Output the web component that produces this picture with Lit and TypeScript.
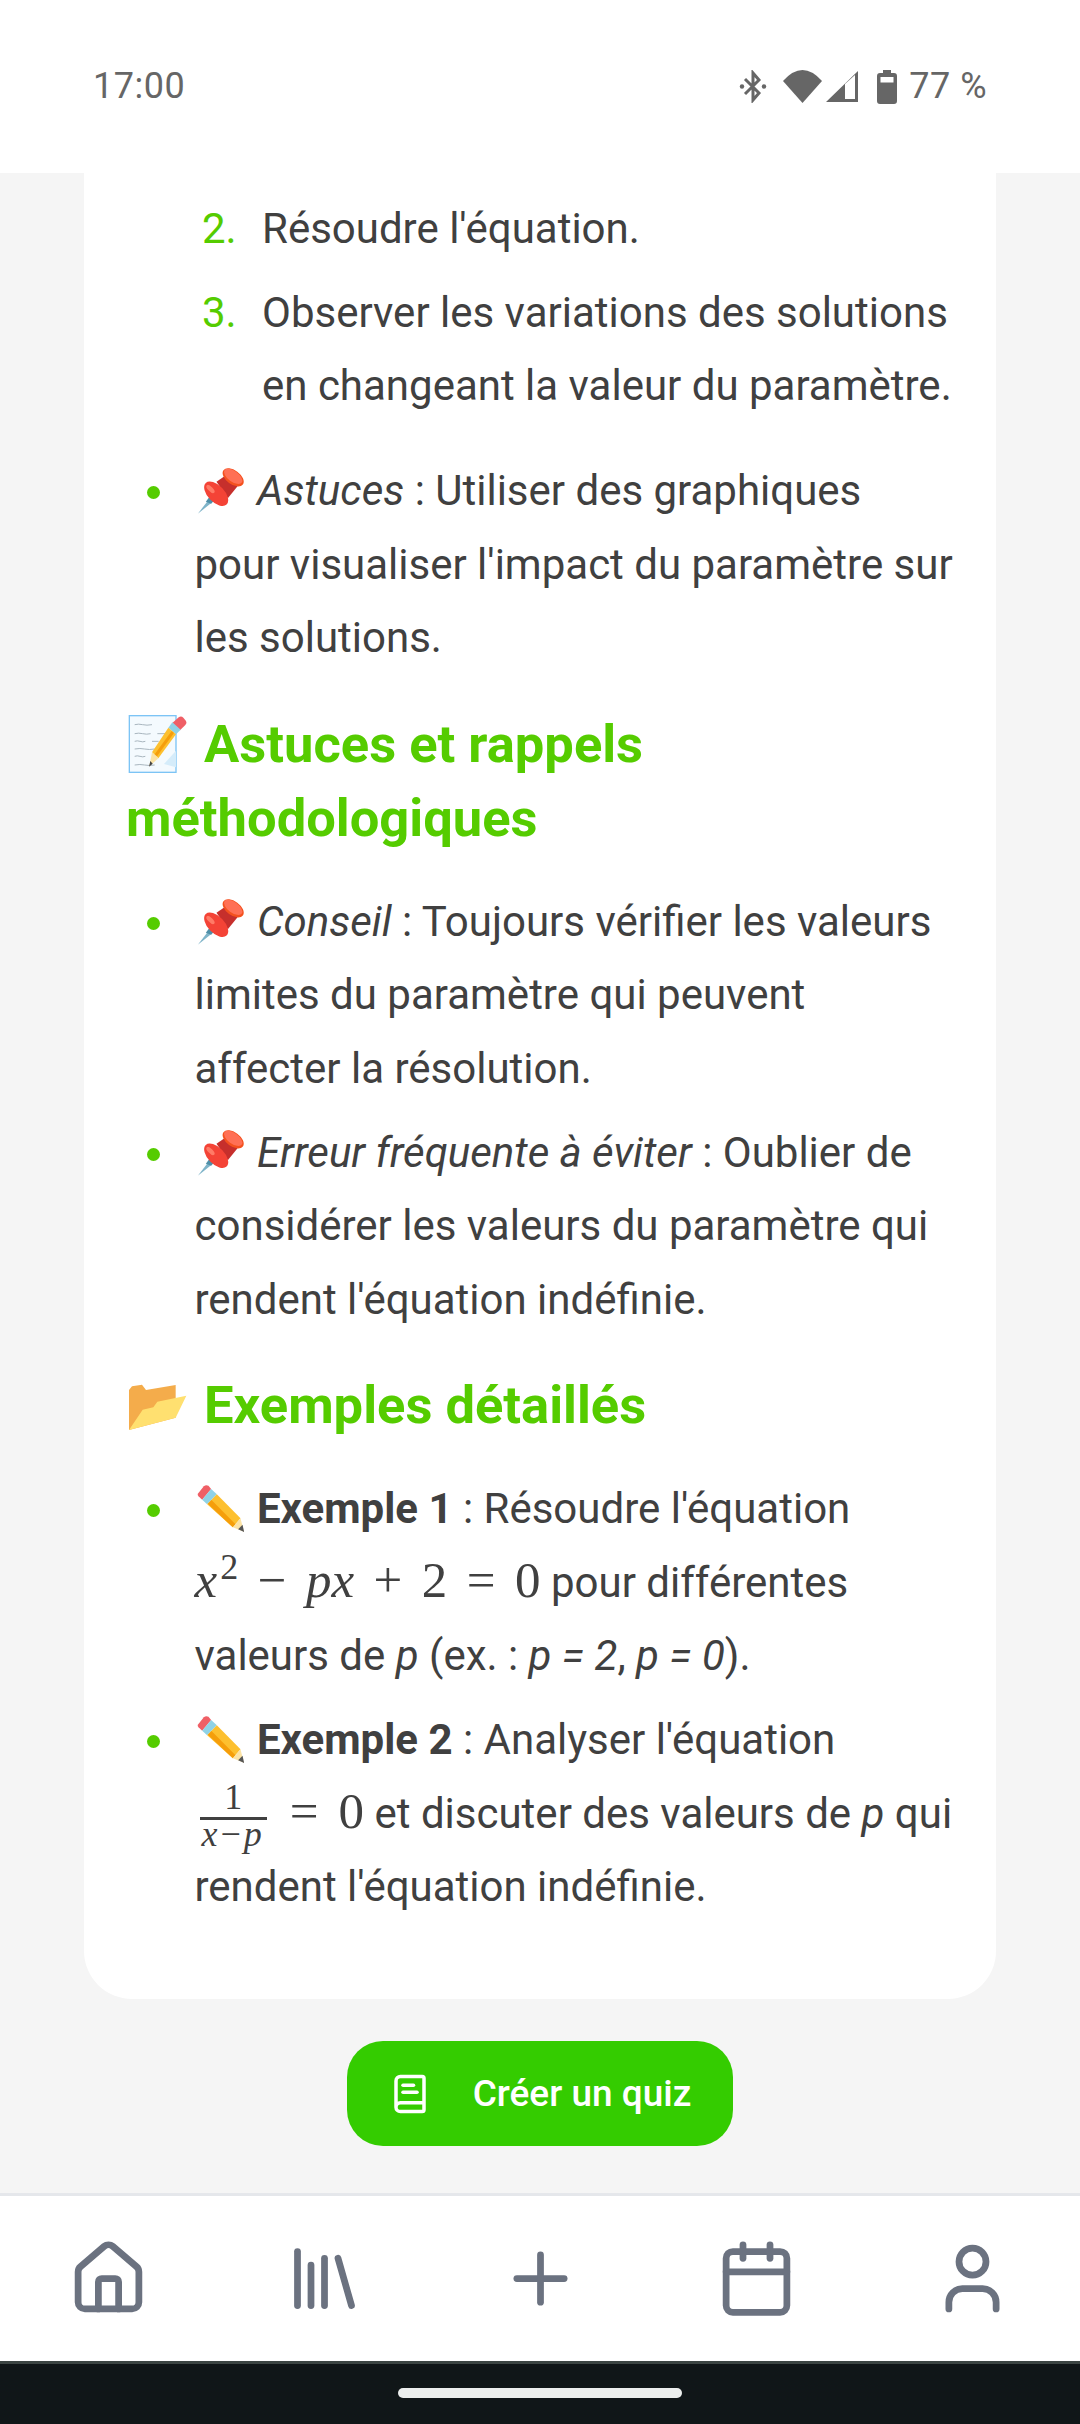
import { LitElement, css, html, svg } from "lit";
import { customElement } from "lit/decorators.js";

const pin = html`<svg class="emoji" viewBox="15 12 153 153">
  <path d="M22 158 58 112 70 120Z" fill="#7fb4c9" />
  <path d="M46 122 58 106 72 116 62 128Z" fill="#4f8fa8" />
  <path d="M78 62 116 36 146 70 112 112Z" fill="#c62f2c" />
  <ellipse cx="77" cy="98" rx="45" ry="25" transform="rotate(46 77 98)" fill="#f44336" />
  <ellipse cx="60" cy="84" rx="16" ry="7" transform="rotate(46 60 84)" fill="#ff7a66" />
  <ellipse cx="128" cy="49" rx="36" ry="21" transform="rotate(36 128 49)" fill="#f4511e" />
  <ellipse cx="128" cy="46" rx="32" ry="16" transform="rotate(36 128 46)" fill="#ff7055" />
</svg>`;

const pencil = html`<svg class="emoji" viewBox="15 12 153 153">
  <path d="M22 44 40 22Q46 16 54 20L62 30 35 62 24 52Q20 48 22 44Z" fill="#ef5f66" />
  <path d="M35 62 62 30 79 46 50 76Z" fill="#8fd2e6" />
  <path d="M50 76 79 46 150 118 127 145Z" fill="#fdc02f" />
  <path d="M52 74 63 63 135 136 127 145Z" fill="#f59e0b" />
  <path d="M127 145 150 118 160 158Z" fill="#fbe3a6" />
  <path d="M143 151 156 137 161 159Z" fill="#555" />
</svg>`;

const memo = html`<svg class="emoji big" viewBox="6 6 195 195">
  <rect x="16" y="20" width="140" height="170" fill="#f4fafe" stroke="#7cc4f5" stroke-width="4" />
  <path d="M32 47q12-3 24 0t28 0M32 74q12-3 24 0t24 0M100 74h26M32 97q8-3 16 0t16 0M84 97h20M32 120q16-3 30 0t30 0M32 142q8-3 16 0t16 0M32 168q16-3 30 0t30 0" fill="none" stroke="#a9b6bf" stroke-width="3" />
  <path d="M120 165 156 125V175Z" fill="#d5ecfa" />
  <path d="M145 42 165 24Q172 20 178 26L186 36Q190 42 184 48L168 64Z" fill="#ef5f66" />
  <path d="M133 56 145 40 170 62 156 76Z" fill="#8fd2e6" />
  <path d="M133 56 156 76 103 148 84 130Z" fill="#fdc02f" />
  <path d="M143 66 150 72 99 142 92 136Z" fill="#f59e0b" />
  <path d="M84 130 103 148 76 172Z" fill="#fbe3a6" />
  <path d="M79 156 86 164 75 173Z" fill="#444" />
</svg>`;

const folder = html`<svg class="emoji big" viewBox="6 -9 195 195">
  <path d="M15 45 24 34 54 29 66 45 155 30V128L15 165Z" fill="#f4ac4b" />
  <path d="M15 165 56 104 88 97 100 80 187 62 155 128Z" fill="#ffe070" />
</svg>`;

const navIcons = [
  svg`<path d="M15 21v-8a1 1 0 0 0-1-1h-4a1 1 0 0 0-1 1v8" /><path d="M3 10a2 2 0 0 1 .709-1.528l7-5.999a2 2 0 0 1 2.582 0l7 5.999A2 2 0 0 1 21 10v9a2 2 0 0 1-2 2H5a2 2 0 0 1-2-2z" />`,
  svg`<path d="m16 6 4 14" /><path d="M12 6v14" /><path d="M8 8v12" /><path d="M4 4v16" />`,
  svg`<path d="M5 12h14" /><path d="M12 5v14" />`,
  svg`<path d="M8 2v4" /><path d="M16 2v4" /><rect x="3" y="4" width="18" height="18" rx="2" /><path d="M3 10h18" />`,
  svg`<path d="M19 21v-2a4 4 0 0 0-4-4H9a4 4 0 0 0-4 4v2" /><circle cx="12" cy="7" r="4" />`,
];

@customElement("app-root")
export class AppRoot extends LitElement {
  render() {
    return html`
      <div class="status">
        <span>17:00</span>
        <div class="status-right">
          <svg class="bt" viewBox="0 0 28 33">
            <path d="M6 9 20 23 14 30V3L20 10 6 24" fill="none" stroke="#666" stroke-width="3" />
            <circle cx="3" cy="16.5" r="2.2" fill="#666" /><circle cx="25" cy="16.5" r="2.2" fill="#666" />
          </svg>
          <svg class="wifi" viewBox="0 0 39 33"><path d="M0 11Q19.5-11 39 11L19.5 33Z" fill="#666" /></svg>
          <svg class="signal" viewBox="0 0 32 31">
            <path d="M0 31 32 0V31ZM19 13V28H29V4Z" fill="#666" fill-rule="evenodd" />
          </svg>
          <svg class="battery" viewBox="0 0 20 34">
            <path d="M6 0H14V3H17Q20 3 20 6V31Q20 34 17 34H3Q0 34 0 31V6Q0 3 3 3H6Z" fill="#666" />
            <rect x="3.5" y="7" width="13" height="5.5" fill="#fff" />
          </svg>
          <span class="pct">77 %</span>
        </div>
      </div>

      <main>
        <article class="card">
          <ol class="steps">
            <li><span class="num">2.</span><span>Résoudre l'équation.</span></li>
            <li><span class="num">3.</span><span>Observer les variations des solutions en changeant la valeur du paramètre.</span></li>
          </ol>
          <ul>
            <li>
              <i class="dot"></i>
              <div>${pin} <em>Astuces</em> : Utiliser des graphiques pour visualiser l'impact du paramètre sur les solutions.</div>
            </li>
          </ul>

          <h3>${memo} Astuces et rappels méthodologiques</h3>
          <ul>
            <li>
              <i class="dot"></i>
              <div>${pin} <em>Conseil</em> : Toujours vérifier les valeurs limites du paramètre qui peuvent affecter la résolution.</div>
            </li>
            <li>
              <i class="dot"></i>
              <div>${pin} <em>Erreur fréquente à éviter</em> : Oublier de considérer les valeurs du paramètre qui rendent l'équation indéfinie.</div>
            </li>
          </ul>

          <h3>${folder} Exemples détaillés</h3>
          <ul>
            <li>
              <i class="dot"></i>
              <div>
                ${pencil} <strong>Exemple 1</strong> : Résoudre l'équation
                <span class="math"><i>x</i><sup>2</sup><span class="op">−</span><i>px</i><span class="op">+</span>2<span class="op">=</span>0</span>
                pour différentes valeurs de <em>p</em> (ex. : <em>p = 2</em>, <em>p = 0</em>).
              </div>
            </li>
            <li>
              <i class="dot"></i>
              <div>
                ${pencil} <strong>Exemple 2</strong> : Analyser l'équation
                <span class="math"><span class="frac"><span class="top">1</span><span class="bottom"><i>x</i>−<i>p</i></span></span><span class="op eq">=</span>0</span>
                et discuter des valeurs de <em>p</em> qui rendent l'équation indéfinie.
              </div>
            </li>
          </ul>
        </article>

        <button class="quiz">
          <svg viewBox="0 0 24 24">
            <path d="M4 19.5v-15A2.5 2.5 0 0 1 6.5 2H19a1 1 0 0 1 1 1v18a1 1 0 0 1-1 1H6.5a1 1 0 0 1 0-5H20" />
            <path d="M8 11h8" /><path d="M8 7h6" />
          </svg>
          <span>Créer un quiz</span>
        </button>
      </main>

      <nav>
        ${navIcons.map((icon) => html`<a><svg viewBox="0 0 24 24">${icon}</svg></a>`)}
      </nav>
      <div class="gesture"><span></span></div>
    `;
  }

  static styles = css`
    :host {
      display: flex;
      flex-direction: column;
      height: 2424px;
      overflow: hidden;
      background: #f5f5f5;
      font-family: Roboto, sans-serif;
      font-size: 42px;
      line-height: 73.5px;
      color: #404040;
    }
    .status {
      flex: none;
      height: 173px;
      background: #fff;
      display: flex;
      align-items: center;
      justify-content: space-between;
      padding: 0 93px;
      font-size: 36px;
      letter-spacing: 0.5px;
      color: #666;
    }
    .status-right {
      display: flex;
      align-items: center;
    }
    .bt {
      width: 28px;
      height: 33px;
    }
    .wifi {
      width: 39px;
      height: 33px;
      margin-left: 16px;
    }
    .signal {
      width: 32px;
      height: 31px;
      margin-left: 4px;
    }
    .battery {
      width: 20px;
      height: 34px;
      margin-left: 19px;
    }
    .pct {
      margin-left: 12px;
    }
    main {
      flex: 1;
      min-height: 0;
      overflow: hidden;
      display: flex;
      flex-direction: column;
      align-items: center;
    }
    .card {
      box-sizing: border-box;
      width: 912px;
      background: #fff;
      border-radius: 0 0 48px 48px;
      padding: 18.5px 42px 75.5px;
    }
    ol,
    ul {
      list-style: none;
      margin: 0;
      padding: 0;
    }
    .steps {
      margin-left: 76px;
    }
    .steps li {
      display: grid;
      grid-template-columns: 60px 1fr;
    }
    .steps li + li {
      margin-top: 10.5px;
    }
    .num {
      color: #55cc00;
    }
    .steps + ul {
      margin-top: 31.5px;
    }
    ul li {
      display: grid;
      grid-template-columns: 68.5px 1fr;
    }
    ul li + li {
      margin-top: 10.5px;
    }
    .dot {
      width: 13px;
      height: 13px;
      margin: 32px 0 0 20.5px;
      border-radius: 50%;
      background: #55cc00;
    }
    h3 {
      margin: 32px 0 30px;
      font-size: 52.5px;
      font-weight: 700;
      line-height: 74px;
      color: #55cc00;
    }
    .emoji {
      width: 52px;
      height: 51px;
      vertical-align: -11px;
    }
    .emoji.big {
      width: 65px;
      height: 65px;
      vertical-align: -14px;
    }
    strong {
      font-weight: 700;
    }
    .math {
      font-family: "Liberation Serif", serif;
      font-size: 51px;
      line-height: 1;
      white-space: nowrap;
    }
    .math sup {
      font-size: 36px;
      line-height: 0;
      margin-left: 3px;
    }
    .op {
      margin: 0 19.5px;
    }
    .op.eq {
      margin: 0 20px 0 21px;
    }
    .frac {
      display: inline-flex;
      flex-direction: column;
      align-items: stretch;
      justify-content: center;
      height: 30px;
      margin: 0 2px 0 5px;
      vertical-align: 18.5px;
      font-size: 36px;
      line-height: 40px;
      text-align: center;
    }
    .top {
      border-bottom: 3px solid #404040;
    }
    .bottom {
      line-height: 28px;
      padding: 0 2px;
      letter-spacing: 3px;
    }
    .quiz {
      flex: none;
      display: flex;
      align-items: center;
      gap: 42px;
      height: 105px;
      margin-top: 42px;
      padding: 0 42px;
      border: 0;
      border-radius: 36px;
      background: #34cc00;
      color: #fff;
      font-family: Roboto, sans-serif;
      font-size: 37px;
      font-weight: 500;
    }
    .quiz svg {
      width: 42px;
      height: 42px;
      fill: none;
      stroke: #fff;
      stroke-width: 2;
      stroke-linecap: round;
      stroke-linejoin: round;
    }
    nav {
      flex: none;
      box-sizing: border-box;
      height: 168px;
      display: flex;
      background: #fff;
      border-top: 3px solid #e5e7eb;
    }
    nav a {
      flex: 1;
      display: flex;
      align-items: center;
      justify-content: center;
    }
    nav svg {
      width: 81px;
      height: 81px;
      fill: none;
      stroke: #6b7280;
      stroke-width: 2;
      stroke-linecap: round;
      stroke-linejoin: round;
    }
    .gesture {
      flex: none;
      box-sizing: border-box;
      height: 63px;
      background: #101618;
      border-top: 3px solid #3c4543;
      display: flex;
      justify-content: center;
      padding-top: 24px;
    }
    .gesture span {
      width: 284px;
      height: 10px;
      border-radius: 5px;
      background: #eceeed;
    }
  `;
}
